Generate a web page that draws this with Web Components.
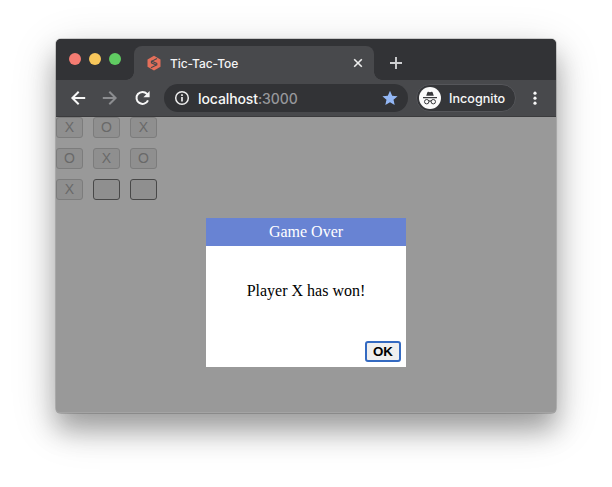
<!DOCTYPE html>
<html lang="en">
<head>
<meta charset="utf-8">
<title>Tic-Tac-Toe</title>
<style>
html, body { margin: 0; height: 100%; background: #fff; overflow: hidden; }
body { display: grid; justify-content: center; align-content: start; padding-top: 39px; box-sizing: border-box; }
</style>
</head>
<body>
<browser-window>
  <browser-tabs slot="tabs">Tic-Tac-Toe</browser-tabs>
  <browser-toolbar slot="toolbar"><span slot="host">localhost</span><span slot="port">:3000</span><span slot="profile">Incognito</span></browser-toolbar>
  <game-board moves="XOXOXOX"></game-board>
  <modal-dialog><span slot="title">Game Over</span>Player X has won!</modal-dialog>
</browser-window>
<script>
class BaseElement extends HTMLElement {
  constructor() {
    super();
    this.attachShadow({ mode: 'open' });
  }
  connectedCallback() { this.shadowRoot.innerHTML = this.render(); }
}

customElements.define('browser-window', class extends BaseElement {
  render() { return `
<style>
:host { display: flex; flex-direction: column; position: relative; width: 500px; height: 374px; border-radius: 5px; background: #999;
  box-shadow: 0 0 0 1px rgba(0,0,0,.16), 0 17px 27px rgba(0,0,0,.3), 0 12px 48px rgba(0,0,0,.16); }
.chrome { border-radius: 5px 5px 0 0; overflow: hidden; background: #323336; }
main { flex: 1; position: relative; background: #999; border-radius: 0 0 4px 4px; box-shadow: inset 0 -1px #a4a4a4; }
</style>
<div class="chrome"><slot name="tabs"></slot><slot name="toolbar"></slot></div>
<main><slot></slot></main>`; }
});

customElements.define('browser-tabs', class extends BaseElement {
  render() { return `
<style>
:host { display: flex; height: 41px; box-sizing: border-box; padding-top: 7px; background: #323336; font: 500 12px Inter, sans-serif; color: #f4f4f5; }
.lights { width: 78px; box-sizing: border-box; display: flex; gap: 8px; padding: 7px 0 0 13px; }
i { width: 12px; height: 12px; border-radius: 50%; background: var(--c); }
.tab { position: relative; width: 240px; height: 34px; box-sizing: border-box; padding: 0 9px 0 12px; display: flex; align-items: center; background: #48494c; border-radius: 8px 8px 0 0; }
.tab::before, .tab::after { content: ""; position: absolute; bottom: 0; width: 8px; height: 8px; }
.tab::before { left: -8px; background: radial-gradient(circle at 0 0, transparent 7.5px, #48494c 8px); }
.tab::after { right: -8px; background: radial-gradient(circle at 100% 0, transparent 7.5px, #48494c 8px); }
.name { margin-left: 8px; flex: 1; letter-spacing: -.08px; }
svg { display: block; flex: none; }
.plus { margin: 9px 0 0 14px; }
</style>
<div class="lights"><i style="--c:#f57c72"></i><i style="--c:#f8c75b"></i><i style="--c:#60cc62"></i></div>
<div class="tab">
  <svg width="16" height="16" viewBox="0 0 16 16"><path d="M8 .8l6.500 3.700v7.300L8 15.500l-6.500-3.700V4.500z" fill="#e46f5a"/><path d="M11 3.400L8.200 4.900 5.400 6.300v1.500l5.300 2.500M5 12.800l2.900-1.500 2.900-1.400V8.400L5.400 6" fill="none" stroke="#48494c" stroke-width="1.100"/></svg>
  <span class="name"><slot></slot></span>
  <svg width="14" height="14" viewBox="0 0 14 14"><path d="M3.200 3.200l7.600 7.600M10.800 3.200l-7.600 7.600" stroke="#eee" stroke-width="1.600"/></svg>
</div>
<svg class="plus" width="16" height="16" viewBox="0 0 16 16"><path d="M8 2v12M2 8h12" stroke="#cfd0d2" stroke-width="1.900"/></svg>`; }
});

customElements.define('browser-toolbar', class extends BaseElement {
  render() { return `
<style>
:host { display: flex; align-items: center; height: 37px; box-sizing: border-box; padding: 0 13px; background: #48494c; border-bottom: 1px solid #3b3b3d; color: #f7f7f7; font: 13px Inter, sans-serif; }
svg { display: block; flex: none; }
.nav { display: flex; gap: 16px; width: 95px; box-sizing: border-box; padding-left: 1px; }
.address { display: flex; align-items: center; width: 244px; height: 28px; box-sizing: border-box; padding: 0 10px; border-radius: 14px; background: #323336; }
.url { margin-left: 8px; flex: 1; font-size: 14px; font-weight: 500; letter-spacing: -.1px; white-space: nowrap; }
.port { color: #97989b; }
.profile { display: flex; align-items: center; gap: 8px; width: 100px; height: 28px; box-sizing: border-box; margin-left: 8px; padding-left: 2px; border-radius: 14px; background: #353639; border: 1px solid #55565a; font-weight: 500; font-size: 12.600px; }
.dots { margin-left: 11px; }
</style>
<div class="nav">
  <svg width="16" height="16" viewBox="0 0 16 16" fill="none" stroke="#f7f7f7" stroke-width="2"><path d="M15.200 8H3M8.700 1.700L2.400 8l6.300 6.300"/></svg>
  <svg width="16" height="16" viewBox="0 0 16 16" fill="none" stroke="#8c8d90" stroke-width="2"><path d="M.8 8H13M7.300 1.700L13.600 8l-6.300 6.300"/></svg>
  <svg width="18" height="16" viewBox="0 0 18 16"><path d="M14 10.300A6 6 0 1 1 13 3.900L14.500 5.400" fill="none" stroke="#f7f7f7" stroke-width="2"/><path d="M15.600 1v6.200H9.400z" fill="#f7f7f7"/></svg>
</div>
<div class="address">
  <svg width="16" height="16" viewBox="0 0 16 16"><circle cx="8" cy="8" r="6.300" fill="none" stroke="#eee" stroke-width="1.500"/><path d="M8 7v4.500M8 4.300v1.700" stroke="#eee" stroke-width="1.700"/></svg>
  <span class="url"><slot name="host"></slot><span class="port"><slot name="port"></slot></span></span>
  <svg width="16" height="16" viewBox="0 0 16 16"><path d="M8 .7l2.200 5 5.400.5-4.100 3.600 1.200 5.300L8 12.300l-4.700 2.800 1.200-5.300L.4 6.200l5.400-.5z" fill="#93b7f5"/></svg>
</div>
<div class="profile">
  <svg width="22" height="22" viewBox="0 0 22 22"><circle cx="11" cy="11" r="11" fill="#fafafa"/><path d="M7.200 8.800l1.200-3.600q.2-.6.900-.4l1.700.4 1.700-.4q.7-.2.900.4l1.200 3.600z" fill="#37383b"/><path d="M4 10.600h14M9.900 14.200q1.100-.7 2.200 0" fill="none" stroke="#37383b" stroke-width="1.100"/><g fill="none" stroke="#37383b" stroke-width="1"><circle cx="7.700" cy="14.700" r="2.200"/><circle cx="14.300" cy="14.700" r="2.200"/></g></svg>
  <slot name="profile"></slot>
</div>
<svg class="dots" width="16" height="16" viewBox="0 0 16 16" fill="#f7f7f7"><circle cx="8" cy="3.200" r="1.600"/><circle cx="8" cy="8.200" r="1.600"/><circle cx="8" cy="13.200" r="1.600"/></svg>`; }
});

customElements.define('game-board', class extends BaseElement {
  render() {
    const moves = this.getAttribute('moves');
    const cells = Array.from({ length: 9 }, (_, n) => `<button ${moves[n] ? 'disabled' : ''}>${moves[n] || ''}</button>`).join('');
    return `
<style>
:host { display: grid; grid-template-columns: repeat(3, 27px); grid-auto-rows: 21px; gap: 10px; }
button { margin: 0; padding: 0; border: 1px solid #484848; border-radius: 3px; background: #8f8f8f; font: 14px/19px "Liberation Sans", sans-serif; color: #000; }
button:disabled { border-color: #7c7c7c; color: #696969; }
</style>${cells}`; }
});

customElements.define('modal-dialog', class extends BaseElement {
  render() { return `
<style>
:host { position: absolute; left: 150px; top: 101px; width: 200px; height: 149px; display: flex; flex-direction: column; background: #fff; font: 16px "Liberation Serif", serif; color: #000; }
header { height: 28px; line-height: 27px; text-align: center; color: #fff; background: #6883d3; }
.message { flex: 1; padding-top: 36px; text-align: center; line-height: 18px; }
footer { display: flex; justify-content: flex-end; padding: 0 5px 5px 0; }
button { width: 36px; height: 21px; box-sizing: border-box; margin: 0; padding: 0; border: 2px solid #346ac1; border-radius: 3px; background: #efefef; color: #000; font: bold 13.333px/17px "Liberation Sans", sans-serif; }
</style>
<header><slot name="title"></slot></header>
<div class="message"><slot></slot></div>
<footer><button>OK</button></footer>`; }
});
</script>
</body>
</html>
